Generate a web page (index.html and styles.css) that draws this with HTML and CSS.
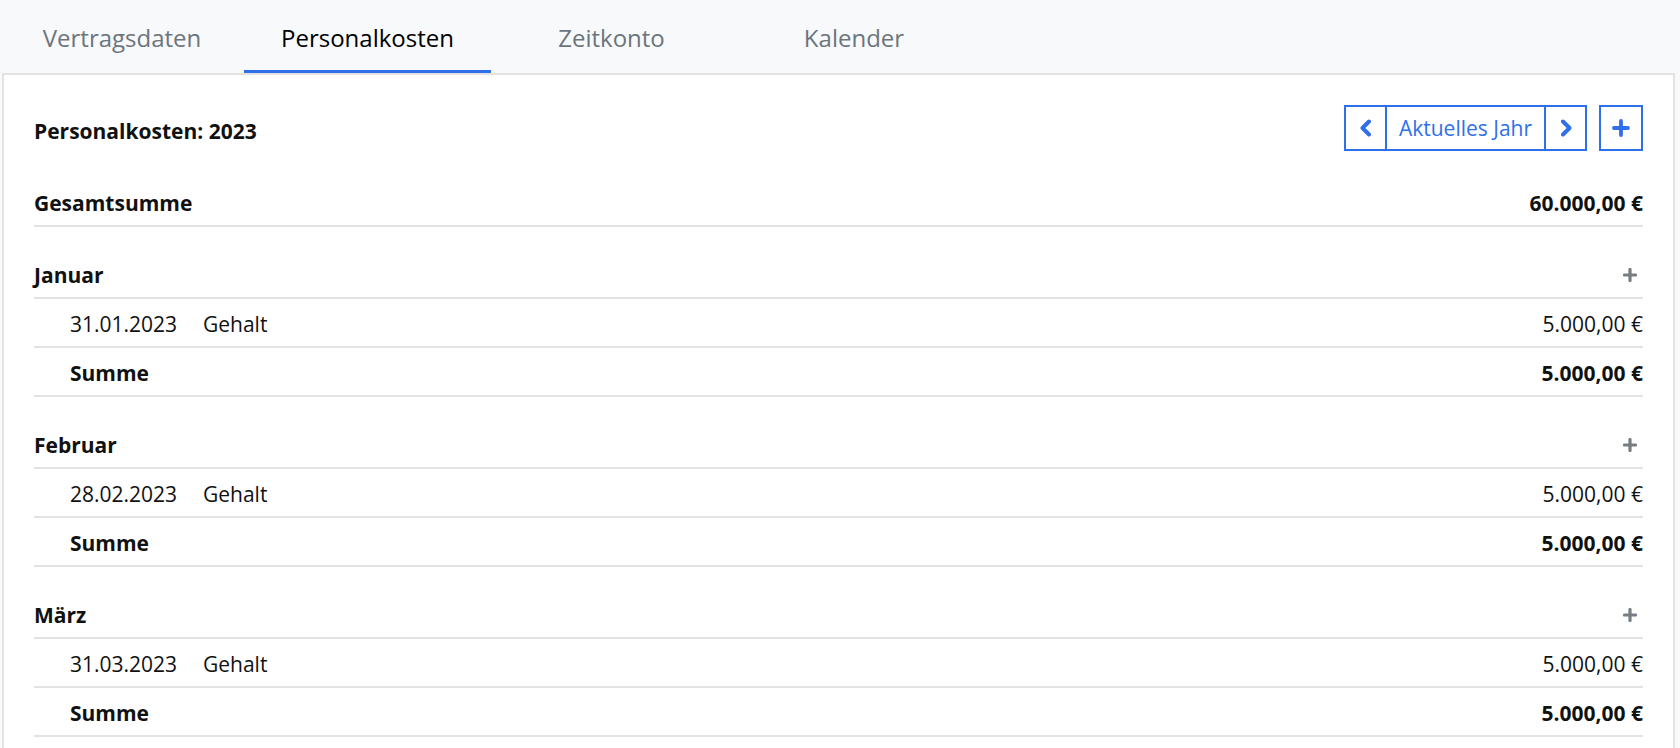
FILE: index.html
```html
<!DOCTYPE html>
<html lang="de">
<head>
    <meta charset="UTF-8">
    <meta name="viewport" content="width=device-width, initial-scale=1.0">
    <title>Personalkosten</title>
    <link rel="stylesheet" href="styles.css">
</head>
<body>
    <nav class="tabs">
        <a class="tab">Vertragsdaten</a>
        <a class="tab active">Personalkosten</a>
        <a class="tab">Zeitkonto</a>
        <a class="tab">Kalender</a>
    </nav>

    <div class="panel">
        <div class="panel-header">
            <h2>Personalkosten: 2023</h2>
            <div class="toolbar">
                <div class="btn-group">
                    <button class="btn btn-icon" title="Vorheriges Jahr">
                        <svg width="14" height="18" viewBox="0 0 14 18"><path d="M10 2.5 L3.5 9 L10 15.5" fill="none" stroke="currentColor" stroke-width="4" stroke-linecap="round" stroke-linejoin="round"/></svg>
                    </button>
                    <button class="btn btn-text">Aktuelles Jahr</button>
                    <button class="btn btn-icon" title="Nächstes Jahr">
                        <svg width="14" height="18" viewBox="0 0 14 18"><path d="M4 2.5 L10.5 9 L4 15.5" fill="none" stroke="currentColor" stroke-width="4" stroke-linecap="round" stroke-linejoin="round"/></svg>
                    </button>
                </div>
                <button class="btn btn-add" title="Hinzufügen">
                    <svg width="18" height="18" viewBox="0 0 18 18"><path d="M9 2 V16 M2 9 H16" stroke="currentColor" stroke-width="3.8" stroke-linecap="round"/></svg>
                </button>
            </div>
        </div>

        <div class="row row-total">
            <span>Gesamtsumme</span>
            <span class="amount">60.000,00 €</span>
        </div>

        <section class="month">
            <div class="row month-head">
                <span>Januar</span>
                <button class="add-entry" title="Eintrag hinzufügen">
                    <svg width="14" height="14" viewBox="0 0 14 14"><path d="M7 1.5 V12.5 M1.5 7 H12.5" stroke="currentColor" stroke-width="3.2" stroke-linecap="round"/></svg>
                </button>
            </div>
            <div class="row entry">
                <span class="date">31.01.2023</span>
                <span class="label">Gehalt</span>
                <span class="amount">5.000,00 €</span>
            </div>
            <div class="row entry sum">
                <span class="label">Summe</span>
                <span class="amount">5.000,00 €</span>
            </div>
        </section>

        <section class="month">
            <div class="row month-head">
                <span>Februar</span>
                <button class="add-entry" title="Eintrag hinzufügen">
                    <svg width="14" height="14" viewBox="0 0 14 14"><path d="M7 1.5 V12.5 M1.5 7 H12.5" stroke="currentColor" stroke-width="3.2" stroke-linecap="round"/></svg>
                </button>
            </div>
            <div class="row entry">
                <span class="date">28.02.2023</span>
                <span class="label">Gehalt</span>
                <span class="amount">5.000,00 €</span>
            </div>
            <div class="row entry sum">
                <span class="label">Summe</span>
                <span class="amount">5.000,00 €</span>
            </div>
        </section>

        <section class="month">
            <div class="row month-head">
                <span>März</span>
                <button class="add-entry" title="Eintrag hinzufügen">
                    <svg width="14" height="14" viewBox="0 0 14 14"><path d="M7 1.5 V12.5 M1.5 7 H12.5" stroke="currentColor" stroke-width="3.2" stroke-linecap="round"/></svg>
                </button>
            </div>
            <div class="row entry">
                <span class="date">31.03.2023</span>
                <span class="label">Gehalt</span>
                <span class="amount">5.000,00 €</span>
            </div>
            <div class="row entry sum">
                <span class="label">Summe</span>
                <span class="amount">5.000,00 €</span>
            </div>
        </section>
    </div>
</body>
</html>
```

FILE: styles.css
```css
:root {
    --page-bg: #f8f9fa;
    --border: #e3e3e3;
    --text: #111;
    --muted: #6c757d;
    --primary: #2f6fea;
}

* {
    box-sizing: border-box;
}

body {
    margin: 0;
    background: var(--page-bg);
    color: var(--text);
    font-family: "Open Sans", "Noto Sans", sans-serif;
    font-size: 21px;
    overflow: hidden;
}

/* Tabs */
.tabs {
    display: flex;
    height: 73px;
}

.tab {
    width: 244px;
    height: 73px;
    padding-top: 5px;
    display: flex;
    align-items: center;
    justify-content: center;
    font-size: 24px;
    color: var(--muted);
    border-bottom: 3px solid transparent;
    cursor: pointer;
}

.tab:nth-child(2) {
    width: 247px;
}

.tab:nth-child(3) {
    width: 241px;
}

.tab.active {
    color: #000;
    border-bottom-color: var(--primary);
}

/* Panel */
.panel {
    margin: 0 5px 0 2px;
    background: #fff;
    border: 2px solid var(--border);
    border-bottom: none;
    padding: 30px 30px 40px;
}

.panel-header {
    display: flex;
    justify-content: space-between;
    align-items: center;
    height: 46px;
    margin-bottom: 27px;
}

.panel-header h2 {
    margin: 5px 0 0;
    font-size: 21px;
    font-weight: 700;
}

.toolbar {
    display: flex;
    gap: 12px;
}

.btn-group {
    display: flex;
}

.btn {
    height: 46px;
    display: flex;
    align-items: center;
    justify-content: center;
    background: #fff;
    color: var(--primary);
    border: 2px solid var(--primary);
    font-family: inherit;
    font-size: 21px;
    padding: 0;
    cursor: pointer;
}

.btn-group .btn + .btn {
    margin-left: -2px;
}

.btn-icon {
    width: 43px;
}

.btn-text {
    width: 161px;
    padding-bottom: 1px;
}

.btn-add {
    width: 44px;
}

/* Rows */
.row {
    display: flex;
    align-items: center;
    height: 49px;
    padding-top: 2px;
    border-bottom: 2px solid var(--border);
}

.row .amount {
    margin-left: auto;
}

.row-total,
.month-head,
.sum {
    font-weight: 700;
}

.month {
    margin-top: 23px;
}

.entry {
    padding-left: 36px;
}

.entry .date {
    width: 133px;
}

.add-entry {
    margin-left: auto;
    margin-right: 6px;
    padding: 0;
    border: none;
    background: none;
    color: #777d83;
    display: flex;
    cursor: pointer;
}
```
